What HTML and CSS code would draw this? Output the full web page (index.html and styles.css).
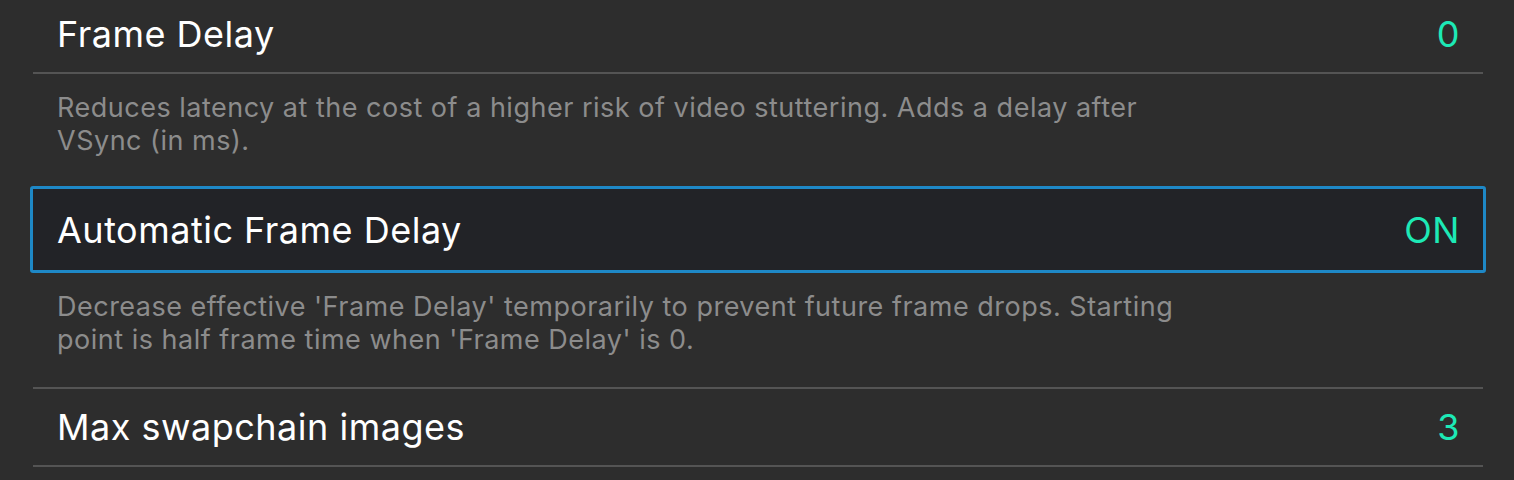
FILE: index.html
```html
<!DOCTYPE html>
<html lang="en">
<head>
<meta charset="utf-8">
<title>Settings</title>
<link rel="stylesheet" href="styles.css">
</head>
<body>
<div class="list">
  <div class="row">
    <span class="label">Frame Delay</span>
    <span class="value">0</span>
  </div>
  <div class="desc">Reduces latency at the cost of a higher risk of video stuttering. Adds a delay after VSync (in ms).</div>
  <div class="row focused">
    <span class="label">Automatic Frame Delay</span>
    <span class="value">ON</span>
  </div>
  <div class="desc">Decrease effective 'Frame Delay' temporarily to prevent future frame drops. Starting point is half frame time when 'Frame Delay' is 0.</div>
  <div class="row">
    <span class="label">Max swapchain images</span>
    <span class="value">3</span>
  </div>
</div>
</body>
</html>
```

FILE: styles.css
```css
html, body {
  margin: 0;
  padding: 0;
  background: #2d2d2d;
  height: 100%;
  overflow: hidden;
}

body {
  font-family: "Inter", "Noto Sans", sans-serif;
  color: #ffffff;
}

.list {
  display: flex;
  flex-direction: column;
  padding: 0 31px 0 33px;
  margin-top: -6px;
}

.row {
  display: flex;
  align-items: center;
  justify-content: space-between;
  height: 76px;
  padding: 0 24px;
  border-top: 2px solid #545454;
  border-bottom: 2px solid #545454;
  font-size: 36px;
  letter-spacing: 0.5px;
}

.row + .row {
  border-top: none;
}

.desc + .row {
  border-top: 2px solid #545454;
}

.row.focused {
  box-sizing: border-box;
  height: 87px;
  margin: -2px -3px 0;
  padding: 0 24px;
  border: 3px solid #1e88c6;
  border-radius: 3px;
  background: #222327;
}

.value {
  color: #1de9b6;
  margin-right: -1px;
}

.desc {
  padding: 17px 24px 31px;
  max-width: 1140px;
  font-size: 27px;
  line-height: 33px;
  color: #8c8c8c;
  letter-spacing: 0.5px;
}
```
